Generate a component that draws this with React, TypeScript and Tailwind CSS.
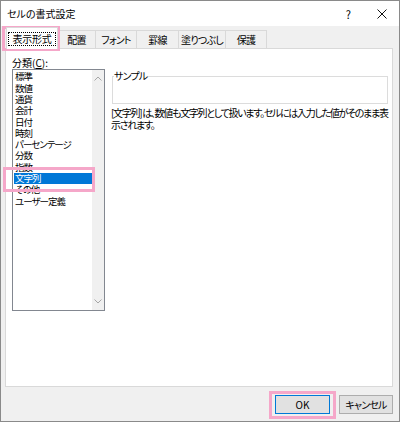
import React from 'react';

const CATEGORIES = ['標準', '数値', '通貨', '会計', '日付', '時刻', 'パーセンテージ', '分数', '指数', '文字列', 'その他', 'ユーザー定義'];

const TABS = [
  { label: '配置', w: 'w-[38px]' },
  { label: 'フォント', w: 'w-[41px]' },
  { label: '罫線', w: 'w-[42px]' },
  { label: '塗りつぶし', w: 'w-[47px]' },
  { label: '保護', w: 'w-[41px]' },
];

function Chevron({ up }: { up?: boolean }) {
  return (
    <svg width="8" height="5" viewBox="0 0 8 5" className="block">
      <path d={up ? 'M0.5 4.5 L4 1 L7.5 4.5' : 'M0.5 0.5 L4 4 L7.5 0.5'} fill="none" stroke="#a6a6a6" strokeWidth="1" />
    </svg>
  );
}

export default function App() {
  const selected = 9;

  return (
    <div
      className="relative w-[400px] h-[422px] border border-[#8a8a8a] bg-[#f0f0f0] flex flex-col text-black text-[10px] [font-family:'Noto_Sans_CJK_JP','Noto_Sans',sans-serif] [font-feature-settings:'palt']"
      id="format-cells-dialog"
    >
      {/* Title bar */}
      <div className="h-[25px] bg-white flex items-center pl-[6px]">
        <span className="leading-[12px]">セルの書式設定</span>
        <span className="ml-auto mr-[26px] text-[11px] leading-[12px]">?</span>
        <svg width="10" height="10" viewBox="0 0 10 10" className="mr-[12px]">
          <path d="M0.5 0.5 L9.5 9.5 M9.5 0.5 L0.5 9.5" stroke="#111" strokeWidth="1" />
        </svg>
      </div>

      {/* Tabs */}
      <div className="h-[22px] flex items-end pl-[5px]">
        <div className="relative z-10 -mb-px h-[22px] w-[52px] bg-white border border-b-0 border-[#d9d9d9] flex items-center justify-center">
          <span className="border border-dotted border-black px-[4px] leading-[12px] tracking-[-0.3px]">表示形式</span>
        </div>
        {TABS.map((t) => (
          <div
            key={t.label}
            className={`${t.w} h-[18px] border-t border-r border-[#d9d9d9] flex items-center justify-center leading-[12px] tracking-[-0.8px]`}
          >
            {t.label}
          </div>
        ))}
      </div>

      {/* Panel */}
      <div className="ml-[4px] mr-[6px] h-[339px] bg-white border border-[#d9d9d9] flex items-start pl-[6px] gap-[7px]">
        <div className="flex flex-col pt-[7px]">
          <div className="h-[13px] leading-[13px]">
            分類(<span className="underline">C</span>):
          </div>
          <div className="w-[93px] h-[242px] border border-[#828790] flex">
            <div className="flex-1 pt-[1.4px] text-[9.5px] tracking-[-1px]">
              {CATEGORIES.map((c, i) => (
                <div
                  key={c}
                  className={`ml-[1px] pl-[1px] h-[11.3px] leading-[11.3px] whitespace-nowrap ${
                    i === selected ? 'bg-[#0078d7] text-white' : ''
                  }`}
                >
                  {c}
                </div>
              ))}
            </div>
            <div className="w-[12px] bg-[#f0f0f0] flex flex-col items-center justify-between py-[6px]">
              <Chevron up />
              <Chevron />
            </div>
          </div>
        </div>

        <div className="flex flex-col pt-[21px]">
          <fieldset className="w-[276px] h-[34px] border border-[#dcdcdc]">
            <legend className="ml-[1px] px-0 leading-[12px] bg-white tracking-[-0.8px]">サンプル</legend>
          </fieldset>
          <p className="mt-[3px] -ml-[1px] leading-[12px] whitespace-nowrap tracking-[-1.3px]">
            [文字列] は、数値も文字列として扱います。セルには入力した値がそのまま表
            <br />
            示されます。
          </p>
        </div>
      </div>

      {/* Buttons */}
      <div className="flex-1 flex justify-end items-start pt-[8px] pr-[6px] gap-[9px]">
        <button className="w-[55px] h-[19px] bg-[#e1e1e1] border border-[#0078d7] leading-[12px]">OK</button>
        <button className="w-[54px] h-[19px] bg-[#e1e1e1] border border-[#adadad] leading-[12px] tracking-[-0.8px]">キャンセル</button>
      </div>

      {/* Pink highlight marks */}
      <div className="absolute left-[1px] top-[25px] w-[58px] h-[25px] border-[3px] border-[#f5a7c9] pointer-events-none" />
      <div className="absolute left-[2px] top-[166px] w-[92px] h-[25px] border-[3px] border-[#f5a7c9] pointer-events-none" />
      <div className="absolute left-[268px] top-[390px] w-[67px] h-[28px] border-[3px] border-[#f5a7c9] pointer-events-none" />
    </div>
  );
}
